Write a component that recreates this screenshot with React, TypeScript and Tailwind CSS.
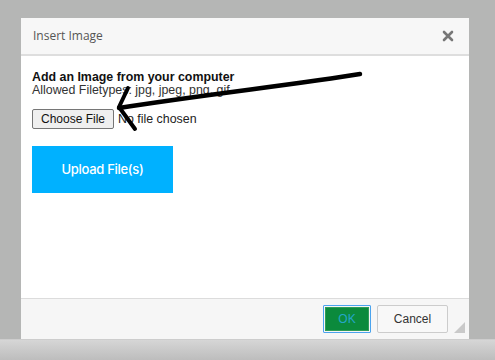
const Arrow = () => (
    <svg className="absolute left-0 top-0 pointer-events-none" width="495" height="360" viewBox="0 0 495 360">
        <path d="M360 74 C300 84 200 95 119 108" stroke="#000" strokeWidth="4.5" fill="none" strokeLinecap="round" />
        <path d="M128 88 L119 107 L135 129" stroke="#000" strokeWidth="4" fill="none" strokeLinecap="round" strokeLinejoin="round" />
    </svg>
);

const App = () => {
    return (
        <div className="relative w-[495px] h-[360px] flex flex-col bg-[#b5b6b5] overflow-hidden font-['Liberation_Sans',Arial,sans-serif]">
            <div className="h-[339px] pt-[18px] pl-[21px]">
                <div className="w-[448px] h-[321px] flex flex-col bg-white">
                    <div className="h-[38px] flex items-center justify-between pl-[12px] pr-[15px] bg-[#f7f7f7] border-b-2 border-[#dedede]">
                        <span className="text-[12px] text-[#555] font-['Open_Sans',sans-serif]">Insert Image</span>
                        <svg width="12" height="12" viewBox="0 0 12 12">
                            <path d="M2 2 L10 10 M10 2 L2 10" stroke="#777" strokeWidth="2.6" strokeLinecap="round" />
                        </svg>
                    </div>
                    <div className="flex-1 pl-[11px] pt-[15px]">
                        <div className="text-[12.4px] leading-[13px] font-bold text-[#111]">Add an Image from your computer</div>
                        <div className="text-[12.4px] leading-[13px] text-[#333]">Allowed Filetypes: jpg, jpeg, png, gif</div>
                        <div className="mt-[12px] flex items-center gap-[4px]">
                            <button className="h-[20px] w-[82px] text-[12px] text-[#111] bg-[#efefef] border border-[#767676] rounded-[2px]">Choose File</button>
                            <span className="text-[12.4px] text-[#222]">No file chosen</span>
                        </div>
                        <button className="mt-[17px] w-[141px] h-[47px] bg-[#00b1ff] text-white text-[13px] font-medium tracking-[-0.3px] font-['Inter',sans-serif]">Upload File(s)</button>
                    </div>
                    <div className="relative h-[41px] flex items-center justify-end gap-[6px] pr-[21px] bg-[#f6f6f6] border-t border-[#dcdcdc]">
                        <button className="w-[48px] h-[28px] border border-[#4aa3ee] p-[1px] rounded-[1px]">
                            <span className="flex items-center justify-center w-full h-full bg-[#0b8a3c] border border-[#2e9c58] text-[12px] text-[#25a6c8]">OK</span>
                        </button>
                        <button className="w-[71px] h-[28px] bg-[#f8f8f8] border border-[#cccccc] rounded-[2px] text-[12px] text-[#333]">Cancel</button>
                        <svg className="absolute right-[4px] bottom-[6px]" width="11" height="11" viewBox="0 0 11 11">
                            <path d="M11 0 L11 11 L0 11 Z" fill="#c9c9c9" />
                        </svg>
                    </div>
                </div>
            </div>
            <div className="flex-1 bg-gradient-to-b from-[#d6d6d6] to-[#bdbdbd] border-t border-[#cdcdcd]"></div>
            <Arrow />
        </div>
    );
};

export default App;
